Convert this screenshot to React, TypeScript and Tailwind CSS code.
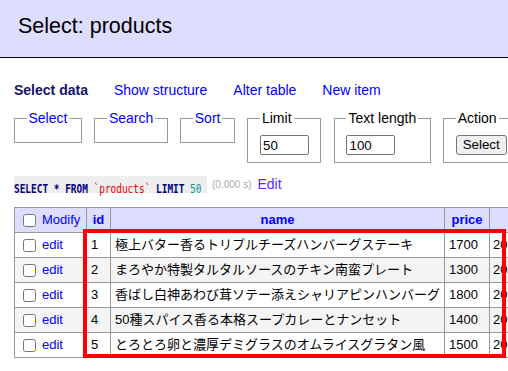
import React from 'react';

type Product = {
  id: number;
  name: string;
  price: number;
  createdAt: string;
};

const products: Product[] = [
  { id: 1, name: '極上バター香るトリプルチーズハンバーグステーキ', price: 1700, createdAt: '2024-05-01 12:00:00' },
  { id: 2, name: 'まろやか特製タルタルソースのチキン南蛮プレート', price: 1300, createdAt: '2024-05-01 12:00:00' },
  { id: 3, name: '香ばし白神あわび茸ソテー添えシャリアピンハンバーグ', price: 1800, createdAt: '2024-05-01 12:00:00' },
  { id: 4, name: '50種スパイス香る本格スープカレーとナンセット', price: 1400, createdAt: '2024-05-01 12:00:00' },
  { id: 5, name: 'とろとろ卵と濃厚デミグラスのオムライスグラタン風', price: 1500, createdAt: '2024-05-01 12:00:00' },
];

const Fieldset: React.FC<{ legend: string; link?: boolean; children?: React.ReactNode }> = ({
  legend,
  link,
  children,
}) => (
  <fieldset className="shrink-0 border border-[#999] px-[11.5px] pt-[8px] pb-[7px]">
    <legend className={`px-[2px] text-[14px] leading-[18px] ${link ? 'text-[#00f]' : 'text-black'}`}>
      {legend}
    </legend>
    {children}
  </fieldset>
);

const App: React.FC = () => {
  return (
    <div className="relative w-full h-screen overflow-hidden bg-white text-black font-['Liberation_Sans','Noto_Sans_CJK_JP',sans-serif]">
      <div className="h-[58px] bg-[#ddf] border-b border-black pl-[18px] pt-[14px]">
        <h2 className="text-[21.5px] leading-[24px]">Select: products</h2>
      </div>

      <div className="pl-[14px]">
        <div className="mt-[23px] flex gap-[26px] text-[14px] leading-[18px] whitespace-nowrap">
          <span className="font-bold text-[#14146b]">Select data</span>
          <a className="text-[#00f]">Show structure</a>
          <a className="text-[#00f]">Alter table</a>
          <a className="text-[#00f]">New item</a>
        </div>

        <div className="mt-[10px] flex items-start gap-[12.5px] w-max">
          <Fieldset legend="Select" link />
          <Fieldset legend="Search" link />
          <Fieldset legend="Sort" link />
          <Fieldset legend="Limit">
            <input
              defaultValue="50"
              className="block w-[49px] h-[20px] border border-[#767676] rounded-[2px] px-[2px] text-[13.33px] leading-none"
            />
          </Fieldset>
          <Fieldset legend="Text length">
            <input
              defaultValue="100"
              className="block w-[49px] h-[20px] border border-[#767676] rounded-[2px] px-[2px] text-[13.33px] leading-none"
            />
          </Fieldset>
          <Fieldset legend="Action">
            <button className="block h-[20px] bg-[#efefef] border border-[#767676] rounded-[3px] px-[6px] text-[13.33px] leading-none">
              Select
            </button>
          </Fieldset>
        </div>

        <div className="mt-[12px] flex items-center h-[18px] whitespace-nowrap">
          <span className="inline-block w-[193px] h-[17px] bg-[#eee]">
            <span className="inline-block origin-left scale-x-[0.786] font-['DejaVu_Sans_Mono',monospace] text-[12px] leading-[17px] text-[#000080]">
              <b>SELECT</b> <b>*</b> <b>FROM</b> <span className="text-[#e00]">`products`</span> <b>LIMIT</b>{' '}
              <span className="text-[#099]">50</span>
            </span>
          </span>
          <span className="ml-[5px] text-[10px] text-[#aaa]">(0.000 s)</span>
          <a className="ml-[6px] text-[14px] text-[#5b2cff]">Edit</a>
        </div>

        <table className="mt-[14px] table-fixed w-[626px] text-[13px] border border-[#999]">
          <thead>
            <tr className="bg-[#ddf] h-[25px]">
              <th className="w-[72px] border border-[#999] px-[4px] text-left font-normal">
                <span className="flex items-center">
                  <input type="checkbox" className="ml-[4px] mr-[6px] w-[13px] h-[13px]" />
                  <a className="text-[#00f]">Modify</a>
                </span>
              </th>
              <th className="w-[24px] border border-[#999] px-[2px] text-center font-bold text-[#00f]">id</th>
              <th className="w-[334px] border border-[#999] px-[4px] text-center font-bold text-[#00f]">name</th>
              <th className="w-[45px] border border-[#999] px-[4px] text-center font-bold text-[#00f]">price</th>
              <th className="w-[151px] border border-[#999] px-[4px] text-center font-bold text-[#00f]">created_at</th>
            </tr>
          </thead>
          <tbody>
            {products.map((p, i) => (
              <tr key={p.id} className={`h-[25px] ${i % 2 === 1 ? 'bg-[#f4f4f4]' : 'bg-white'}`}>
                <td className="border border-[#999] px-[4px]">
                  <span className="flex items-center">
                    <input type="checkbox" className="ml-[4px] mr-[6px] w-[13px] h-[13px]" />
                    <a className="text-[#00f]">edit</a>
                  </span>
                </td>
                <td className="border border-[#999] px-[4px]">{p.id}</td>
                <td className="border border-[#999] px-[4px] whitespace-nowrap overflow-hidden">{p.name}</td>
                <td className="border border-[#999] px-[4px]">{p.price}</td>
                <td className="border border-[#999] pl-[3px] pr-[4px] whitespace-nowrap">{p.createdAt}</td>
              </tr>
            ))}
          </tbody>
        </table>
      </div>

      {/* highlight over the data cells */}
      <div className="absolute left-[83px] top-[229px] w-[423px] h-[129px] border-4 border-[#f00] pointer-events-none" />
    </div>
  );
};

export default App;
